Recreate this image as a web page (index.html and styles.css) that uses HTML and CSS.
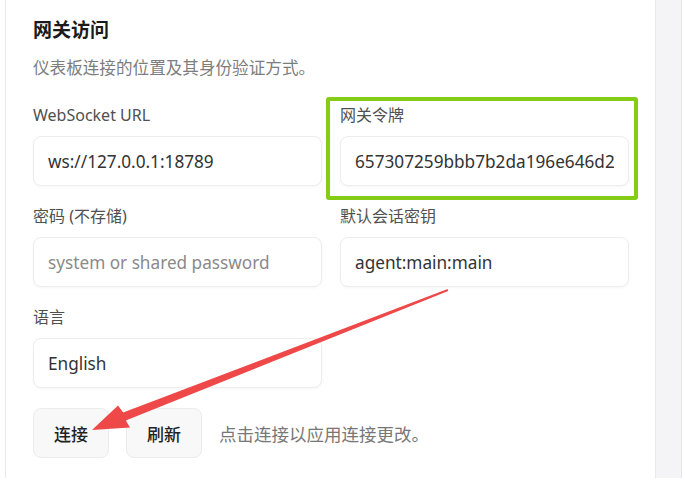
FILE: index.html
```html
<!DOCTYPE html>
<html lang="zh-CN">
<head>
<meta charset="utf-8">
<title>网关访问</title>
<link rel="stylesheet" href="styles.css">
</head>
<body>
<div class="page">
  <section class="card">
    <h2 class="title">网关访问</h2>
    <p class="sub">仪表板连接的位置及其身份验证方式。</p>
    <div class="grid">
      <label class="field">
        <span class="label">WebSocket URL</span>
        <input class="input" type="text" value="ws://127.0.0.1:18789">
      </label>
      <label class="field">
        <span class="label">网关令牌</span>
        <input class="input" type="text" value="657307259bbb7b2da196e646d2a8f1c3">
      </label>
      <label class="field">
        <span class="label">密码 (不存储)</span>
        <input class="input" type="password" placeholder="system or shared password">
      </label>
      <label class="field">
        <span class="label">默认会话密钥</span>
        <input class="input" type="text" value="agent:main:main">
      </label>
      <label class="field">
        <span class="label">语言</span>
        <input class="input" type="text" value="English" readonly>
      </label>
    </div>
    <div class="actions">
      <button class="btn" type="button">连接</button>
      <button class="btn" type="button">刷新</button>
      <span class="hint">点击连接以应用连接更改。</span>
    </div>
    <div class="highlight"></div>
  </section>
  <div class="side"></div>
  <svg class="arrow" width="685" height="483" viewBox="0 0 685 483" aria-hidden="true">
    <polygon fill="#ef4848" points="447.6,288.9 123.2,412.6 118,405.5 92,430 130,427.5 125.8,420.4 448.2,291.1"/>
  </svg>
</div>
</body>
</html>
```

FILE: styles.css
```css
* { box-sizing: border-box; }

html, body {
  margin: 0;
  padding: 0;
  background: #ffffff;
}

body {
  font-family: "Noto Sans", "Noto Sans CJK SC", sans-serif;
  color: #333333;
}

.page {
  position: relative;
  display: flex;
  width: 685px;
  height: 483px;
  overflow: hidden;
}

.card {
  position: relative;
  margin-left: 5px;
  width: 651px;
  height: 478px;
  background: #ffffff;
  border: 1px solid #e9e9ec;
  border-top: none;
  border-bottom: none;
  padding: 17px 26px 0 27px;
}

.title {
  margin: 0;
  font-size: 19px;
  line-height: 26px;
  font-weight: 700;
  color: #1b1b1b;
}

.sub {
  margin: 13px 0 0;
  font-size: 16.6px;
  line-height: 24px;
  color: #7d7d7d;
}

.grid {
  margin-top: 24px;
  display: grid;
  grid-template-columns: 289px 289px;
  column-gap: 18px;
  row-gap: 19px;
}

.field {
  display: flex;
  flex-direction: column;
  gap: 10px;
}

.label {
  font-size: 16px;
  line-height: 22px;
  color: #505050;
}

.input {
  width: 100%;
  height: 50px;
  margin: 0;
  padding: 0 14px;
  border: 1px solid #ededee;
  border-radius: 8px;
  background: #ffffff;
  box-shadow: 0 1px 3px rgba(0, 0, 0, 0.04);
  font-family: "Noto Sans", "Noto Sans CJK SC", sans-serif;
  font-size: 17.2px;
  color: #333333;
  outline: none;
}

.input::placeholder {
  color: #8a8a8a;
}

.actions {
  margin-top: 20px;
  display: flex;
  align-items: center;
  gap: 17px;
}

.btn {
  width: 76px;
  height: 50px;
  margin: 0;
  padding: 0;
  border: 1px solid #ececee;
  border-radius: 8px;
  background: #f8f8f9;
  font-family: "Noto Sans", "Noto Sans CJK SC", sans-serif;
  font-size: 17px;
  font-weight: 500;
  color: #222222;
}

.hint {
  font-size: 17.5px;
  color: #777777;
}

.highlight {
  position: absolute;
  left: 320px;
  top: 97px;
  width: 312px;
  height: 103px;
  border: 4px solid #84cc16;
  border-radius: 3px;
  pointer-events: none;
}

.side {
  width: 26px;
  height: 478px;
  background: #f4f4f6;
  border-right: 1px solid #e6e6e9;
}

.arrow {
  position: absolute;
  left: 0;
  top: 0;
  pointer-events: none;
}
```
